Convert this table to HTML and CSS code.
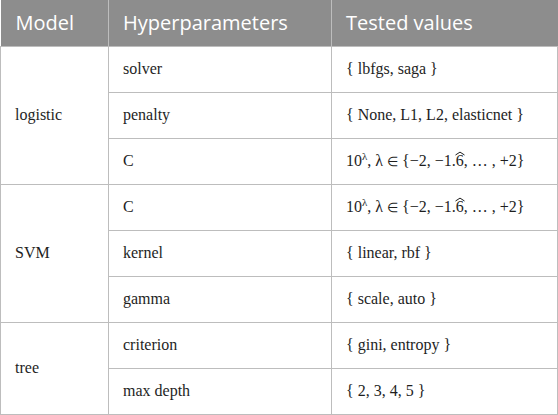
FILE: index.html
```html
<!DOCTYPE html>
<html>
<head>
<meta charset="utf-8">
<link rel="stylesheet" href="styles.css">
</head>
<body>
<table class="tbl">
  <colgroup>
    <col class="c1"><col class="c2"><col class="c3">
  </colgroup>
  <thead>
    <tr><th>Model</th><th>Hyperparameters</th><th>Tested values</th></tr>
  </thead>
  <tbody>
    <tr><td rowspan="3">logistic</td><td>solver</td><td>{ lbfgs, saga }</td></tr>
    <tr><td>penalty</td><td>{ None, L1, L2, elasticnet }</td></tr>
    <tr><td>C</td><td>10<sup>λ</sup>, λ <span class="in">∈</span> {−2, −1.<span class="hat">6<svg class="caret" viewBox="0 0 10 4"><polyline points="0.5,3.5 5,0.6 9.5,3.5"/></svg></span>, … , +2}</td></tr>
    <tr><td rowspan="3">SVM</td><td>C</td><td>10<sup>λ</sup>, λ <span class="in">∈</span> {−2, −1.<span class="hat">6<svg class="caret" viewBox="0 0 10 4"><polyline points="0.5,3.5 5,0.6 9.5,3.5"/></svg></span>, … , +2}</td></tr>
    <tr><td>kernel</td><td>{ linear, rbf }</td></tr>
    <tr><td>gamma</td><td>{ scale, auto }</td></tr>
    <tr><td rowspan="2">tree</td><td>criterion</td><td>{ gini, entropy }</td></tr>
    <tr><td>max depth</td><td>{ 2, 3, 4, 5 }</td></tr>
  </tbody>
</table>
</body>
</html>
```

FILE: styles.css
```css
html, body { margin: 0; padding: 0; background: #fff; }
.tbl {
  border-collapse: collapse;
  width: 557px;
  table-layout: fixed;
}
.c1 { width: 108px; }
.c2 { width: 223px; }
.c3 { width: 226px; }
.tbl th {
  background: #8d8d8d;
  color: #fff;
  font-family: "Open Sans", sans-serif;
  font-weight: 400;
  font-size: 20px;
  text-align: left;
  height: 46px;
  padding: 0 0 0 14px;
  border-left: 1px solid #bdbdbd;
  box-sizing: border-box;
}
.tbl th:first-child { border-left: none; padding-left: 15px; }
.tbl td {
  font-family: "Liberation Serif", serif;
  font-size: 16px;
  color: #1e1e1e;
  height: 46px;
  padding: 0 0 0 14px;
  border: 1px solid #bdbdbd;
  box-sizing: border-box;
  vertical-align: middle;
}
.tbl sup { font-size: 11px; line-height: 0; vertical-align: 6px; }
.in { font-size: 13px; }
.hat { position: relative; display: inline-block; }
.caret {
  position: absolute;
  left: -1px;
  top: -1px;
  width: 10px;
  height: 5px;
  fill: none;
  stroke: #1e1e1e;
  stroke-width: 1;
}
```
